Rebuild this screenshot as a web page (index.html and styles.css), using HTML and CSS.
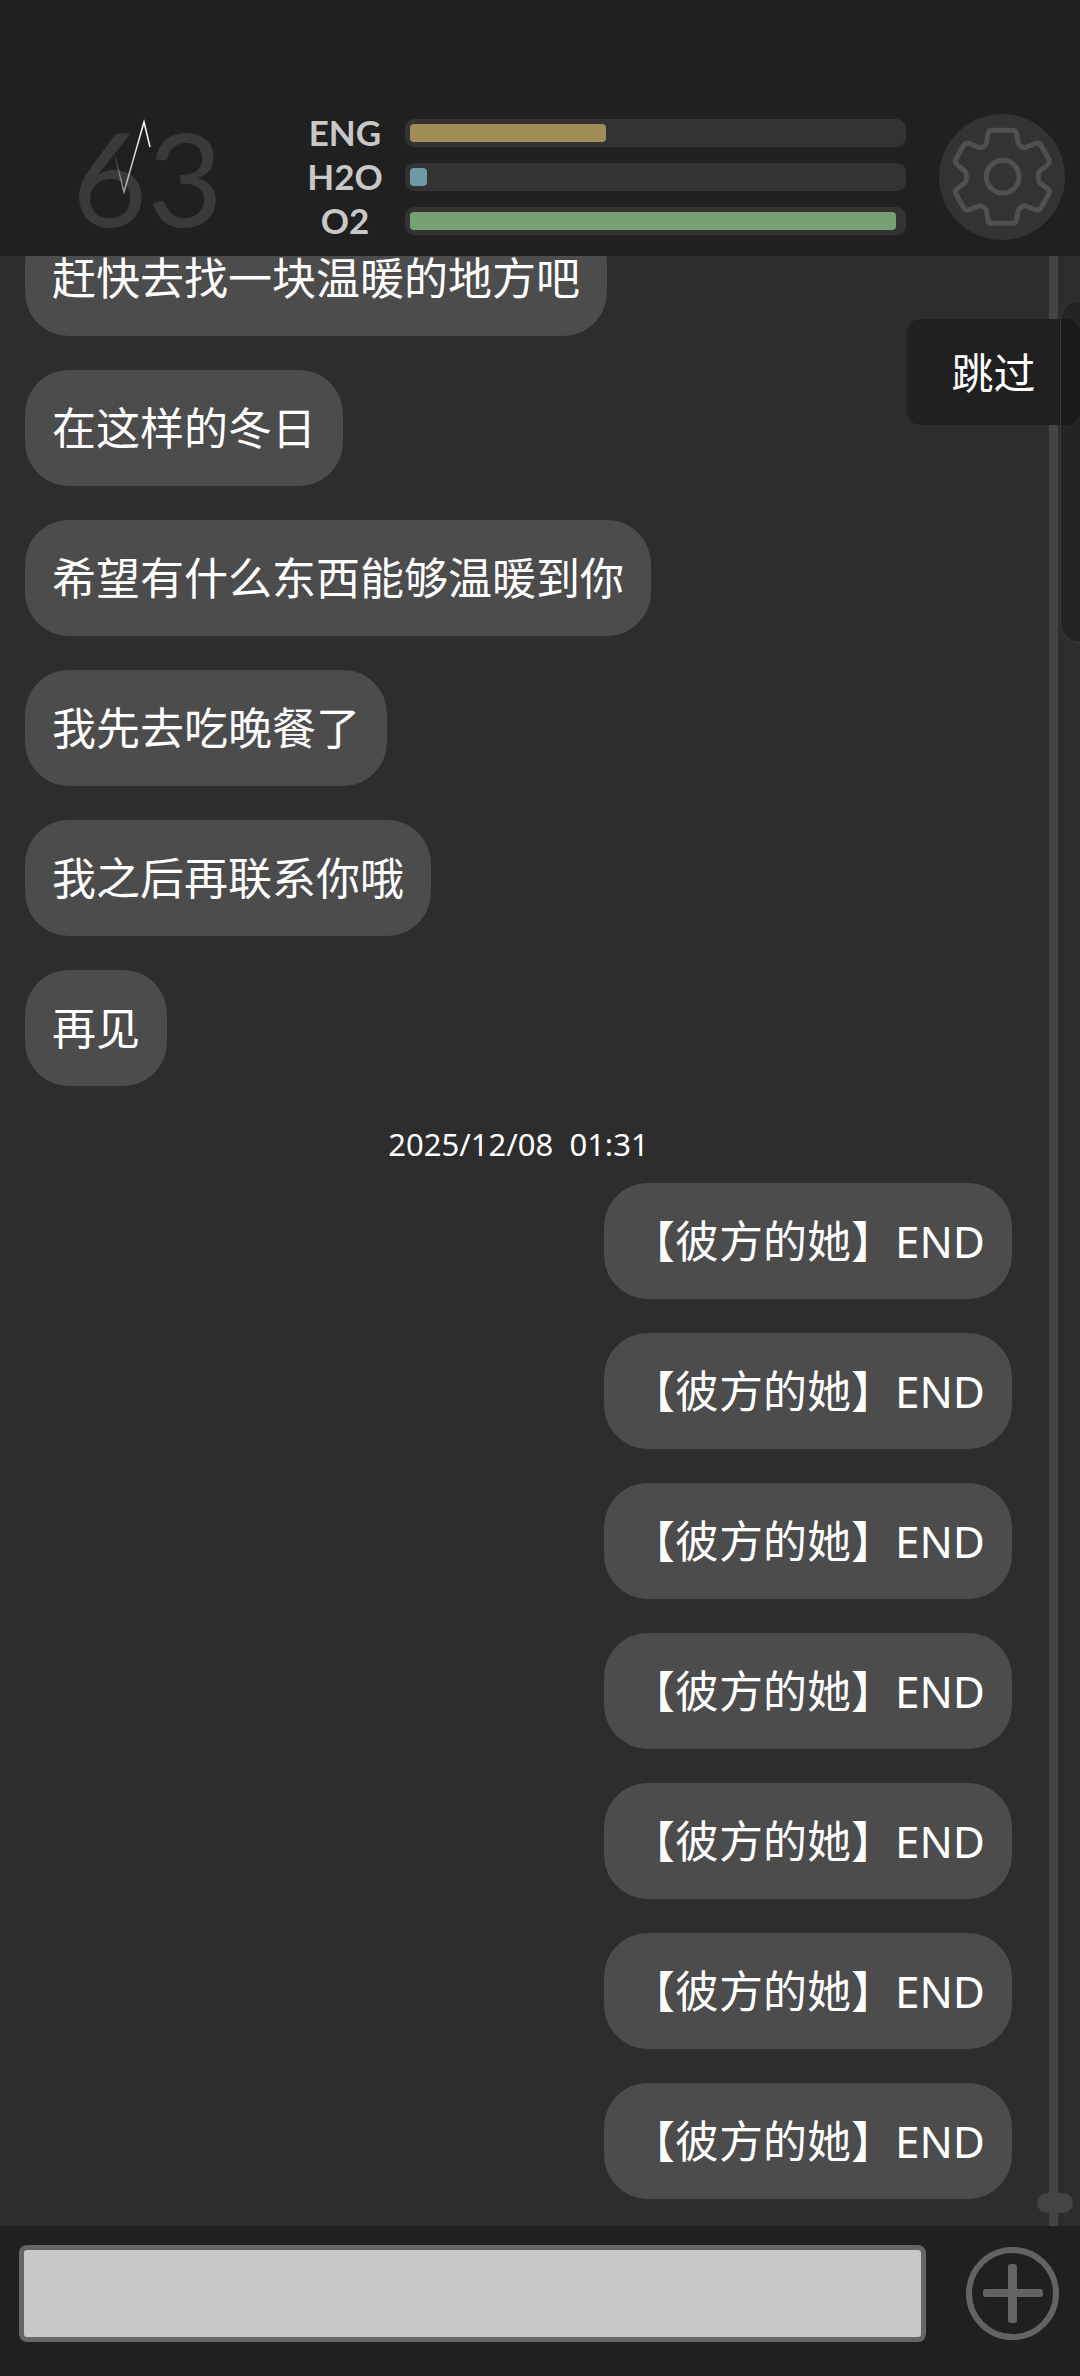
FILE: index.html
```html
<!DOCTYPE html>
<html lang="zh-CN">
<head>
  <meta charset="UTF-8" />
  <meta name="viewport" content="width=device-width, initial-scale=1.0"/>
  <title>彼方的她</title>
  <link rel="stylesheet" href="styles.css">
</head>
<body>
  <header class="status">
    <div class="heart">
      <span class="rate">63</span>
      <svg class="pulse" viewBox="0 0 40 76" aria-hidden="true">
        <defs>
          <linearGradient id="fade" x1="0" x2="1" y1="0" y2="0">
            <stop offset="0" stop-color="#fff" stop-opacity="0"/>
            <stop offset="0.3" stop-color="#fff" stop-opacity="0.6"/>
            <stop offset="0.8" stop-color="#fff"/>
          </linearGradient>
        </defs>
        <path d="M2 34 L12 73 L32 3 L38 28" fill="none" stroke="url(#fade)" stroke-width="1.5"/>
      </svg>
    </div>

    <div class="meters">
      <span class="name">ENG</span>
      <div class="bar"><div class="fill eng" style="width: 40%"></div></div>
      <span class="name">H2O</span>
      <div class="bar"><div class="fill h2o" style="width: 3.4%"></div></div>
      <span class="name">O2</span>
      <div class="bar"><div class="fill o2" style="width: 99%"></div></div>
    </div>

    <button class="settings" aria-label="设置">
      <svg viewBox="294 72 378 378">
        <g fill="none" stroke="#505050" stroke-width="15" stroke-linejoin="round">
          <path d="M452 121 H515 Q524 121 526 130 L532 160 Q534 166 540 169 L545 172 Q550 174 556 171 L583 161 Q594 157 600 166 L623 207 Q628 217 620 224 L598 242 Q592 247 592 254 V268 Q592 275 598 280 L620 296 Q628 303 623 313 L600 353 Q594 363 583 359 L556 349 Q550 346 545 349 L540 352 Q534 355 532 361 L526 391 Q524 400 515 400 H452 Q443 400 441 391 L436 361 Q434 355 428 352 L423 349 Q418 346 412 349 L385 359 Q374 363 368 353 L345 313 Q340 303 348 296 L370 280 Q376 275 376 268 V254 Q376 247 370 242 L348 224 Q340 217 345 207 L368 166 Q374 157 385 161 L412 171 Q418 174 423 172 L428 169 Q434 166 436 160 L441 130 Q443 121 452 121 Z"/>
          <circle cx="485" cy="260" r="49"/>
        </g>
      </svg>
    </button>
  </header>

  <main class="chat">
    <div class="group">
      <p class="msg">赶快去找一块温暖的地方吧</p>
      <p class="msg">在这样的冬日</p>
      <p class="msg">希望有什么东西能够温暖到你</p>
      <p class="msg">我先去吃晚餐了</p>
      <p class="msg">我之后再联系你哦</p>
      <p class="msg">再见</p>
    </div>
    <time class="date" datetime="2025-12-08T01:31">2025/12/08  01:31</time>
    <div class="group mine">
      <p class="msg">【彼方的她】END</p>
      <p class="msg">【彼方的她】END</p>
      <p class="msg">【彼方的她】END</p>
      <p class="msg">【彼方的她】END</p>
      <p class="msg">【彼方的她】END</p>
      <p class="msg">【彼方的她】END</p>
      <p class="msg">【彼方的她】END</p>
    </div>

    <div class="track"><div class="thumb"></div></div>
    <button class="skip">跳过</button>
    <div class="drawer"></div>
  </main>

  <footer class="compose">
    <input type="text" class="text" aria-label="消息">
    <button class="add" aria-label="添加">
      <svg viewBox="0 0 93 93">
        <circle cx="46.500" cy="46.500" r="43.500" fill="none" stroke="#636363" stroke-width="6"/>
        <rect x="17" y="42" width="60" height="8" rx="3" fill="#636363"/>
        <rect x="42" y="17" width="9" height="59" rx="3" fill="#636363"/>
      </svg>
    </button>
  </footer>
</body>
</html>
```
FILE: styles.css
```css
* {
  box-sizing: border-box;
}
body {
  margin: 0;
  height: 100vh;
  display: flex;
  flex-direction: column;
  background: #2d2d2d;
  color: #fff;
  font-family: "Noto Sans", "Noto Sans CJK SC", sans-serif;
}
button {
  padding: 0;
  border: none;
  background: none;
  color: inherit;
  font-family: inherit;
  cursor: pointer;
}
svg {
  display: block;
  width: 100%;
}

/* top bar */
.status {
  display: flex;
  align-items: center;
  gap: 33px;
  height: 256px;
  padding: 98px 15px 0 72px;
  background: #202020;
}
.heart {
  position: relative;
  width: 200px;
}
.rate {
  display: block;
  color: #3a3a3a;
  font-family: Lato, sans-serif;
  font-size: 130px;
  line-height: 132px;
}
.pulse {
  position: absolute;
  left: 40px;
  top: 8px;
  width: 40px;
}
.meters {
  flex: 1;
  display: grid;
  grid-template-columns: 80px 1fr;
  align-items: center;
  column-gap: 20px;
  row-gap: 16px;
}
.name {
  color: #c8c8c8;
  font-family: Lato, sans-serif;
  font-size: 35px;
  font-weight: bold;
  line-height: 26px;
  padding-bottom: 2px;
  text-align: center;
}
.bar {
  height: 28px;
  padding: 5px;
  border-radius: 9px;
  background: #333;
}
.fill {
  height: 18px;
  border-radius: 4px;
}
.eng {
  background: #a08c55;
}
.h2o {
  background: #6f9ba5;
}
.o2 {
  background: #78a075;
}
.settings {
  width: 126px;
  height: 126px;
  border-radius: 50%;
  background: #333;
}

/* messages */
.chat {
  position: relative;
  flex: 1;
  min-height: 0;
  display: flex;
  flex-direction: column;
  justify-content: flex-end;
  padding: 0 68px 27px 25px;
  overflow: hidden;
}
.group {
  display: flex;
  flex-direction: column;
  align-items: flex-start;
  gap: 34px;
}
.mine {
  align-items: flex-end;
}
.msg {
  margin: 0;
  padding: 26px 27px;
  border-radius: 44px;
  background: #4c4c4c;
  font-size: 44px;
  line-height: 64px;
}
.date {
  padding: 38px 0 19px;
  font-size: 31px;
  line-height: 40px;
  text-align: center;
  white-space: pre;
}
.track {
  position: absolute;
  top: 0;
  right: 22px;
  bottom: 0;
  width: 9px;
  background: #444;
}
.thumb {
  position: absolute;
  left: -12px;
  bottom: 13px;
  width: 36px;
  height: 20px;
  border-radius: 10px;
  background: #444;
}
.skip {
  position: absolute;
  top: 63px;
  right: 0;
  width: 173px;
  height: 106px;
  padding-bottom: 4px;
  border-radius: 14px;
  background: #202020;
  font-size: 42px;
}
.drawer {
  position: absolute;
  top: 44px;
  right: -20px;
  width: 40px;
  height: 343px;
  border: 1px solid #3c3a2c;
  border-radius: 24px;
  background: rgba(0, 0, 0, 0.2);
}

/* bottom bar */
.compose {
  display: flex;
  align-items: center;
  gap: 40px;
  height: 150px;
  padding: 0 21px 16px 19px;
  background: #202020;
}
.text {
  flex: 1;
  min-width: 0;
  height: 97px;
  padding: 0 20px;
  border: 5px solid #666;
  border-radius: 8px;
  background: #c8c8c8;
  color: #202020;
  font-family: inherit;
  font-size: 44px;
}
.add {
  width: 93px;
  height: 93px;
}
```
